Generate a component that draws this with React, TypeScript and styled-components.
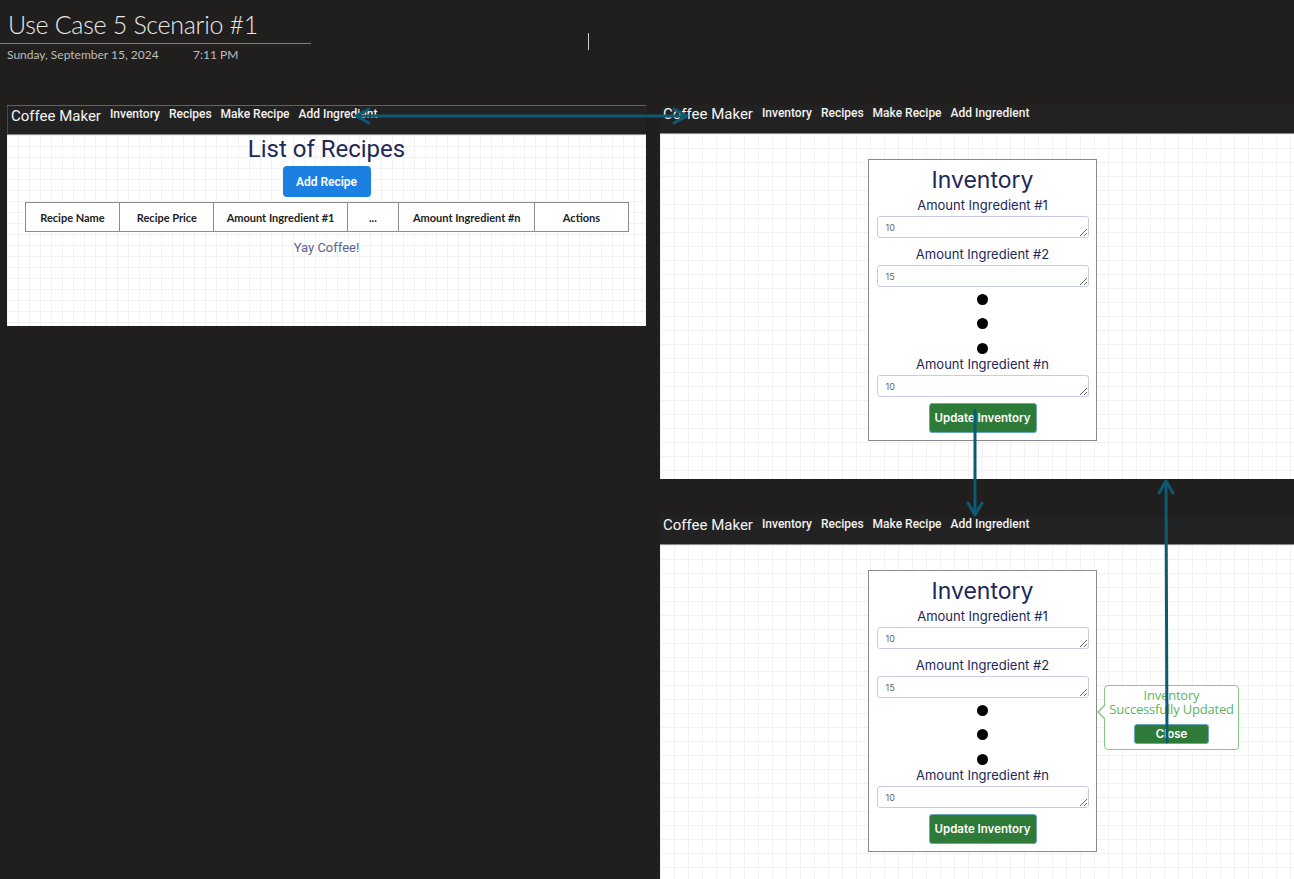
import React from 'react';
import styled, { createGlobalStyle } from 'styled-components';

const GlobalStyle = createGlobalStyle`
  html, body {
    margin: 0;
    padding: 0;
    background: #201f1e;
  }
  body {
    width: 1294px;
    height: 879px;
    overflow: hidden;
  }
`;

const Page = styled.div`
  position: relative;
  width: 1294px;
  height: 879px;
  background: #201f1e;
`;

/* OneNote page header */

const Header = styled.header`
  display: flex;
  align-items: flex-start;
  height: 105px;
`;

const TitleBlock = styled.div`
  width: 311px;
`;

const Title = styled.h1`
  margin: 0;
  box-sizing: border-box;
  height: 44px;
  padding: 9px 0 0 8px;
  font: 300 25px/30px Lato, 'Open Sans', sans-serif;
  letter-spacing: -0.3px;
  color: #e8e8e8;
  border-bottom: 1px solid #7d7d7d;
`;

const DateRow = styled.div`
  display: flex;
  padding: 3px 0 0 7px;
  font: 400 12px/16px Lato, sans-serif;
  color: #bdbdbd;
`;

const DateText = styled.span`
  width: 186px;
`;

const Caret = styled.div`
  width: 1px;
  height: 17px;
  margin: 33px 0 0 277px;
  background: #cfcfcf;
`;

/* canvas of pasted screenshots */

const Canvas = styled.div`
  display: grid;
  grid-template-columns: 639px 634px;
  column-gap: 14px;
  padding-left: 7px;
  align-items: start;
`;

const RightColumn = styled.div`
  display: flex;
  flex-direction: column;
`;

const Shot = styled.div<{ $h: number; $top?: number; $lined?: boolean }>`
  height: ${(p) => p.$h}px;
  display: flex;
  flex-direction: column;
  background: #201f1e;
  padding-top: ${(p) => p.$top || 0}px;
  box-sizing: border-box;
  border-top: ${(p) => (p.$lined ? '1px solid #626262' : 'none')};
`;

const GridArea = styled.div<{ $cell: number }>`
  flex: 1;
  position: relative;
  display: flex;
  flex-direction: column;
  background-color: #ffffff;
  background-image: linear-gradient(#f2f2f2 1px, transparent 1px),
    linear-gradient(90deg, #f2f2f2 1px, transparent 1px);
  background-size: ${(p) => p.$cell}px ${(p) => p.$cell}px;
`;

const NavBar = styled.nav<{ $pad: number; $top: number; $edge?: boolean }>`
  display: flex;
  align-items: flex-start;
  height: 29px;
  box-sizing: border-box;
  padding: ${(p) => p.$top}px 0 0 ${(p) => p.$pad}px;
  background: #222222;
  border-bottom: 1px solid #8a8a8a;
  border-left: ${(p) => (p.$edge ? '1px solid #4a4a4a' : 'none')};
`;

const Brand = styled.span`
  font: 400 15px/18px Roboto, sans-serif;
  color: #f5f5f5;
  margin-right: 9px;
`;

const NavLink = styled.span<{ $drop: number }>`
  margin-top: ${(p) => p.$drop}px;
  font: 500 12px/14px Roboto, sans-serif;
  color: #f2f2f2;
  margin-right: 9px;
`;

/* recipes list screenshot */

const PageTitle = styled.h2`
  margin: 0;
  align-self: center;
  font: 400 24px/28px Roboto, sans-serif;
  color: #1e2857;
`;

const BlueButton = styled.button`
  align-self: center;
  margin-top: 3px;
  width: 88px;
  height: 31px;
  border: none;
  border-radius: 4px;
  background: #1c7fe2;
  color: #ffffff;
  font: 600 12px Roboto, sans-serif;
`;

const Table = styled.table`
  align-self: center;
  margin-top: 5px;
  width: 604px;
  border-collapse: collapse;
  background: #ffffff;
`;

const Th = styled.th<{ $w: number }>`
  width: ${(p) => p.$w}px;
  height: 28px;
  padding: 0;
  border: 1px solid #8c8c8c;
  font: 700 11px Lato, sans-serif;
  color: #222;
`;

const Note = styled.p`
  margin: 8px 0 0;
  align-self: center;
  font: 400 13px/16px Roboto, sans-serif;
  color: #5d6290;
`;

/* inventory screenshot */

const Card = styled.div`
  width: 229px;
  box-sizing: border-box;
  margin: 25px 0 0 208px;
  padding: 6px 0 7px;
  border: 1px solid #8a8a8a;
  background: #ffffff;
  display: flex;
  flex-direction: column;
  align-items: center;
`;

const CardTitle = styled.h3`
  margin: 0;
  font: 400 23px/28px Inter, sans-serif;
  color: #1d2859;
`;

const Label = styled.label<{ $gap: number }>`
  margin-top: ${(p) => p.$gap}px;
  font: 400 13px/16px Inter, sans-serif;
  color: #1d2859;
`;

const Amount = styled.textarea`
  margin-top: 3px;
  width: 212px;
  height: 22px;
  box-sizing: border-box;
  padding: 5px 8px 0;
  border: 1px solid #c8cce2;
  border-radius: 3px;
  font: 400 9px/11px Inter, sans-serif;
  color: #666;
  resize: vertical;
  overflow: hidden;
  outline: none;
`;

const Dots = styled.div`
  display: flex;
  flex-direction: column;
  gap: 13.5px;
  margin-top: 6.5px;
`;

const Dot = styled.span`
  width: 11px;
  height: 11px;
  border-radius: 50%;
  background: #000;
`;

const GreenButton = styled.button<{ $w: number; $h: number; $gap: number }>`
  margin-top: ${(p) => p.$gap}px;
  width: ${(p) => p.$w}px;
  height: ${(p) => p.$h}px;
  box-sizing: border-box;
  border: 1px solid #6aa6bd;
  border-radius: 3px;
  background: #2e7a39;
  color: #ffffff;
  font: 600 11.5px Inter, sans-serif;
  padding: 0;
`;

const Toast = styled.div`
  position: absolute;
  left: 444px;
  top: 140px;
  width: 135px;
  height: 65px;
  box-sizing: border-box;
  padding-top: 2px;
  border: 1px solid #86c886;
  border-radius: 4px;
  background: #ffffff;
  display: flex;
  flex-direction: column;
  align-items: center;

  &::before,
  &::after {
    content: '';
    position: absolute;
    border-style: solid;
  }
  &::before {
    left: -8px;
    top: 18px;
    border-width: 8px 8px 8px 0;
    border-color: transparent #86c886 transparent transparent;
  }
  &::after {
    left: -6px;
    top: 19px;
    border-width: 7px 7px 7px 0;
    border-color: transparent #ffffff transparent transparent;
  }
`;

const ToastText = styled.div`
  font: 400 13px/14px 'Open Sans', sans-serif;
  color: #5cb65c;
  text-align: center;
  letter-spacing: -0.2px;
  white-space: nowrap;
`;

const ArrowLayer = styled.svg`
  position: absolute;
  left: 0;
  top: 0;
  pointer-events: none;
`;

const columns = [
  { label: 'Recipe Name', w: 95 },
  { label: 'Recipe Price', w: 94 },
  { label: 'Amount Ingredient #1', w: 134 },
  { label: '...', w: 51 },
  { label: 'Amount Ingredient #n', w: 137 },
  { label: 'Actions', w: 93 },
];

const links = ['Inventory', 'Recipes', 'Make Recipe', 'Add Ingredient'];

function Nav({ pad, top, edge }: { pad: number; top: number; edge?: boolean }) {
  return (
    <NavBar $pad={pad} $top={top} $edge={edge}>
      <Brand>Coffee Maker</Brand>
      {links.map((l) => (
        <NavLink key={l} $drop={top === 0 ? 1 : 0}>
          {l}
        </NavLink>
      ))}
    </NavBar>
  );
}

function InventoryCard() {
  return (
    <Card>
      <CardTitle>Inventory</CardTitle>
      <Label $gap={3}>Amount Ingredient #1</Label>
      <Amount readOnly defaultValue="10" />
      <Label $gap={8}>Amount Ingredient #2</Label>
      <Amount readOnly defaultValue="15" />
      <Dots>
        <Dot />
        <Dot />
        <Dot />
      </Dots>
      <Label $gap={2.5}>Amount Ingredient #n</Label>
      <Amount readOnly defaultValue="10" />
      <GreenButton $w={108} $h={30} $gap={6}>
        Update Inventory
      </GreenButton>
    </Card>
  );
}

export default function App() {
  const teal = '#0c5a73';
  return (
    <Page>
      <GlobalStyle />
      <Header>
        <TitleBlock>
          <Title>Use Case 5 Scenario #1</Title>
          <DateRow>
            <DateText>Sunday, September 15, 2024</DateText>
            <span>7:11 PM</span>
          </DateRow>
        </TitleBlock>
        <Caret />
      </Header>

      <Canvas>
        <Shot $h={221} $lined>
          <Nav pad={3} top={1} edge />
          <GridArea $cell={11}>
            <PageTitle>List of Recipes</PageTitle>
            <BlueButton>Add Recipe</BlueButton>
            <Table>
              <thead>
                <tr>
                  {columns.map((c) => (
                    <Th key={c.label} $w={c.w}>
                      {c.label}
                    </Th>
                  ))}
                </tr>
              </thead>
            </Table>
            <Note>Yay Coffee!</Note>
          </GridArea>
        </Shot>

        <RightColumn>
          <Shot $h={374}>
            <Nav pad={3} top={0} />
            <GridArea $cell={14}>
              <InventoryCard />
            </GridArea>
          </Shot>
          <Shot $h={400} $top={37}>
            <Nav pad={3} top={0} />
            <GridArea $cell={14}>
              <InventoryCard />
              <Toast>
                <ToastText>
                  Inventory
                  <br />
                  Successfully Updated
                </ToastText>
                <GreenButton $w={75} $h={20} $gap={8}>
                  Close
                </GreenButton>
              </Toast>
            </GridArea>
          </Shot>
        </RightColumn>
      </Canvas>

      <ArrowLayer width={1294} height={879} viewBox="0 0 1294 879">
        <g stroke={teal} strokeWidth={3} fill="none" strokeLinecap="round" strokeLinejoin="round">
          <line x1={358} y1={116} x2={685} y2={116} />
          <polyline points="369,109 356,116 369,123" />
          <polyline points="674,109 687,116 674,123" />
          <line x1={975} y1={410} x2={975} y2={513} />
          <polyline points="968,503 975,515 982,503" />
          <line x1={1167} y1={742} x2={1166} y2={482} />
          <polyline points="1159,493 1166,481 1173,493" />
        </g>
      </ArrowLayer>
    </Page>
  );
}
